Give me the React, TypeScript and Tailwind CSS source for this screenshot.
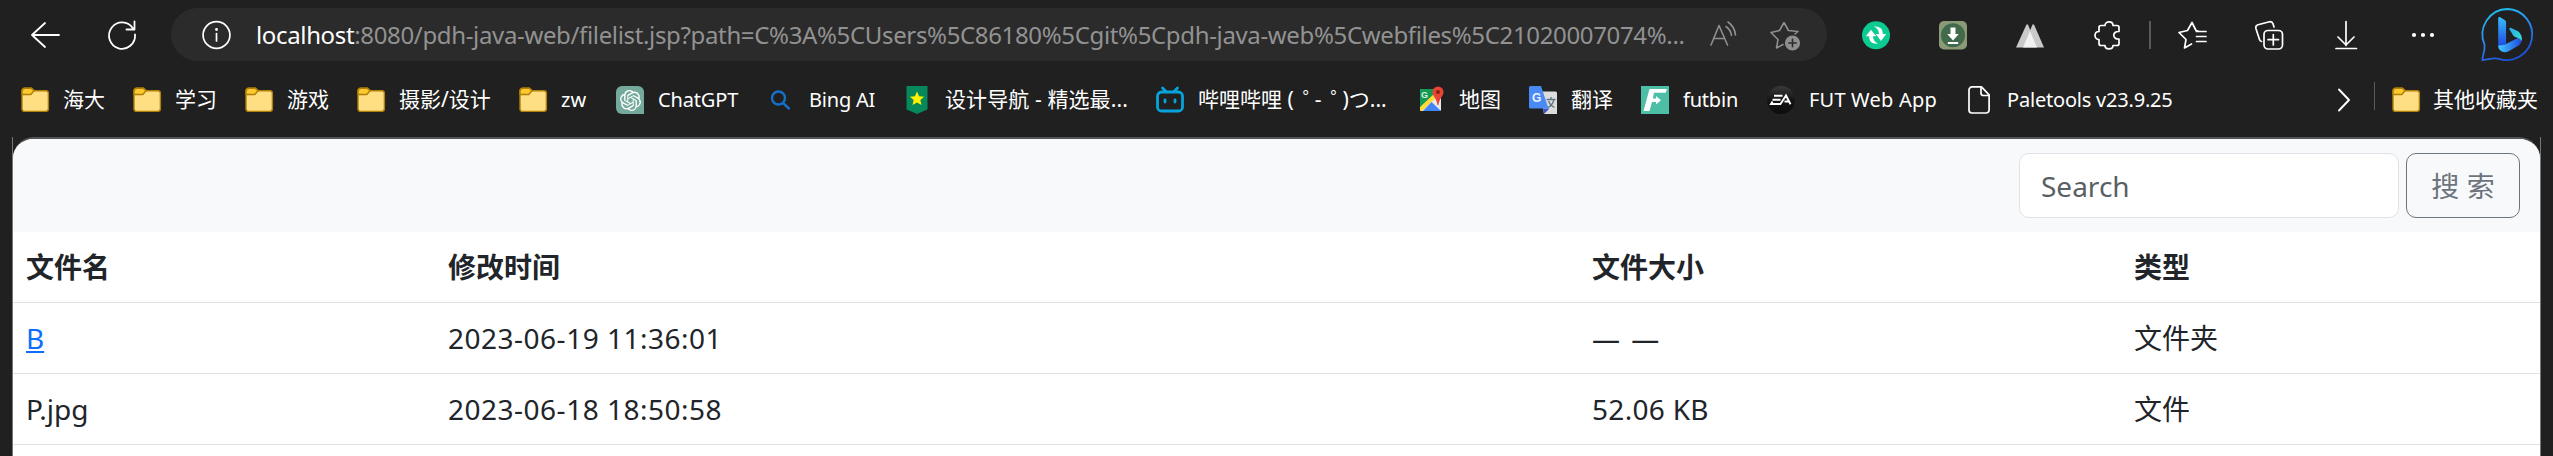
import { type ReactNode } from "react";
import { SiOpenai } from "react-icons/si";

const box = "h-7 w-7 shrink-0 overflow-visible";

function Line({ children, w = 1.8, color = "#fff" }: { children: ReactNode; w?: number; color?: string }) {
  return (
    <svg viewBox="0 0 28 28" className={box} fill="none" stroke={color} strokeWidth={w} strokeLinecap="round" strokeLinejoin="round">
      {children}
    </svg>
  );
}

function Folder() {
  return (
    <svg viewBox="0 0 28 28" className={box}>
      <path d="M1 5.2a3 3 0 0 1 3-3h6.500l2.800 2.600H25a2.400 2.400 0 0 1 2.400 2.400v15.600a2.600 2.600 0 0 1-2.600 2.600H3.400A2.400 2.400 0 0 1 1 23Z" fill="#ffdf84" stroke="#b07f07" strokeWidth="1.4" />
      <path d="M1 8V5.200a3 3 0 0 1 3-3h6.200L13 4.800 9.800 8.500H1.500Z" fill="#fcc92e" stroke="#b07f07" strokeWidth="1.4" />
    </svg>
  );
}

const chatgpt = (
  <div className="flex h-7 w-7 shrink-0 items-center justify-center rounded-[6px] rounded-br-none bg-[#74aa9c] text-white">
    <SiOpenai size={21} />
  </div>
);

const search = (
  <Line w={2.4} color="#1670c8">
    <circle cx="11.500" cy="12" r="6.500" />
    <path d="m16.500 17.500 5.500 5" />
  </Line>
);

const shield = (
  <svg viewBox="0 0 28 28" className={box}>
    <path d="M3.500 0h21v23.500L14 28 3.500 23.500Z" fill="#06885a" />
    <path d="m14 5.500 2.100 4.700 5 .5-3.800 3.400 1.200 5-4.500-2.700-4.500 2.700 1.200-5-3.800-3.400 5-.5Z" fill="#fff100" />
  </svg>
);

const bili = (
  <Line w={2.8} color="#06a3dc">
    <rect x="1.500" y="6" width="25" height="19" rx="4" />
    <path d="m6.500 2 3.500 3.500M21.500 2 18 5.500" />
    <path d="M9 14v2M19 14v2" />
  </Line>
);

const maps = (
  <svg viewBox="0 0 28 28" className={box}>
    <rect x="3" y="3" width="21" height="22" rx="1.500" fill="#e8eaea" />
    <path d="M3 4.500A1.500 1.500 0 0 1 4.500 3H19v6L3 24Z" fill="#159a53" />
    <path d="M3 21 18 7l3 3L5 25H4a1 1 0 0 1-1-1Z" fill="#ffd93b" />
    <path d="M6 25 14.500 16l9.500 9Z" fill="#4285f4" />
    <text x="4" y="11.500" fontSize="9" fontWeight="700" fill="#d9f1e3" fontFamily="Liberation Sans, sans-serif">G</text>
    <path d="M21 .5a5.500 5.500 0 0 1 5.500 5.500c0 4-4.500 7-5 13h-1c-.5-6-5-9-5-13A5.500 5.500 0 0 1 21 .5Z" fill="#e94335" />
    <circle cx="21" cy="6" r="2" fill="#8c1f14" />
  </svg>
);

const translate = (
  <svg viewBox="0 0 28 28" className={box}>
    <path d="M11 5.500h15.500A1.500 1.500 0 0 1 28 7v21H15Z" fill="#dcdcdc" />
    <path d="M14 22.500h6.500L15 28Z" fill="#3a53c5" />
    <path d="M1.500 0H12l7.500 22.500h-18A1.500 1.500 0 0 1 0 21V1.500A1.500 1.500 0 0 1 1.500 0Z" fill="#4a8af5" />
    <text x="3" y="16" fontSize="12" fontWeight="700" fill="#e9f1ff" fontFamily="Liberation Sans, sans-serif">G</text>
    <path d="M17.500 13.500h9M22 11v2.500M25 13.500c-1 4-3 6.500-6 8M19.500 15c1 3 3 5 6 6.500" fill="none" stroke="#5d7680" strokeWidth="1.300" />
  </svg>
);

const futbin = (
  <svg viewBox="0 0 28 28" className={box}>
    <path d="M0 0h28v28H0Z" fill="#4cbfa6" />
    <path d="M8.500 3H26l-1.300 3.800H13L11.800 12.500H15V10l5 4.300-5 4.200V16h-4L8.500 25H2.500Z" fill="#fff" />
  </svg>
);

const ea = (
  <svg viewBox="0 0 28 28" className={box}>
    <defs>
      <linearGradient id="ea" x1="0" y1="0" x2="0" y2="1">
        <stop offset="0" stopColor="#3a3a3a" />
        <stop offset="0.500" stopColor="#141414" />
        <stop offset="1" stopColor="#0d0d0d" />
      </linearGradient>
    </defs>
    <circle cx="14" cy="14" r="14" fill="url(#ea)" />
    <path d="M7 9.800h8.500M5.500 13.800h8M14 18H4l1.500-2.500M13.500 18l5.500-8.500 4.500 8.800M17.500 15.500h5" fill="none" stroke="#fff" strokeWidth="1.900" />
  </svg>
);

const page = (
  <Line w={1.7}>
    <path d="M7 .9h9.500l7.600 8V24a3 3 0 0 1-3 3H7a3 3 0 0 1-3-3V3.900a3 3 0 0 1 3-3Z" />
    <path d="M16 1v6a2.500 2.500 0 0 0 2.500 2.500H24" />
  </Line>
);

const kana = <span className="inline-block w-[21px] pl-[9px]">゜</span>;

const bookmarks: { icon: ReactNode; slot: string; text: string; label: ReactNode }[] = [
  { icon: <Folder />, slot: "w-[112px]", text: "text-[21px]", label: "海大" },
  { icon: <Folder />, slot: "w-[112px]", text: "text-[21px]", label: "学习" },
  { icon: <Folder />, slot: "w-[112px]", text: "text-[21px]", label: "游戏" },
  { icon: <Folder />, slot: "w-[162px]", text: "text-[21px]", label: "摄影/设计" },
  { icon: <Folder />, slot: "w-[97px]", text: "text-[20px]", label: "zw" },
  { icon: chatgpt, slot: "w-[151px]", text: "text-[20px] tracking-[-0.15px]", label: "ChatGPT" },
  { icon: search, slot: "w-[136px]", text: "text-[20px] tracking-[-0.2px]", label: "Bing AI" },
  { icon: shield, slot: "w-[253px]", text: "text-[21px] tracking-[0.1px]", label: "设计导航 - 精选最..." },
  { icon: bili, slot: "w-[261px]", text: "text-[21px]", label: <>哔哩哔哩 ({kana}-{kana})つ...</> },
  { icon: maps, slot: "w-[112px]", text: "text-[21px]", label: "地图" },
  { icon: translate, slot: "w-[112px]", text: "text-[21px]", label: "翻译" },
  { icon: futbin, slot: "w-[126px]", text: "text-[20px] tracking-[-0.2px]", label: "futbin" },
  { icon: ea, slot: "w-[198px]", text: "text-[20px] tracking-[0.2px]", label: "FUT Web App" },
  { icon: page, slot: "w-[220px]", text: "text-[20px] tracking-[-0.2px]", label: "Paletools v23.9.25" },
];

const rows = [
  { name: "B", link: true, time: "2023-06-19 11:36:01", size: "— —", kind: "文件夹" },
  { name: "P.jpg", link: false, time: "2023-06-18 18:50:58", size: "52.06 KB", kind: "文件" },
];

const cell = "h-[71px] border-b border-[#dee2e6] px-[14px] py-0 first:pl-[13px]";

function Bing() {
  return (
    <svg viewBox="0 0 53 53" className="ml-[44px] h-[53px] w-[53px] shrink-0 overflow-visible" fill="none">
      <defs>
        <linearGradient id="ring" x1="0.200" y1="0" x2="0.600" y2="1">
          <stop offset="0" stopColor="#1cc4f0" />
          <stop offset="0.500" stopColor="#2f86f0" />
          <stop offset="1" stopColor="#1b4fd8" />
        </linearGradient>
        <linearGradient id="stem" x1="0" y1="0" x2="0" y2="1">
          <stop offset="0" stopColor="#37bdff" />
          <stop offset="1" stopColor="#1c48e0" />
        </linearGradient>
        <linearGradient id="leaf" x1="0" y1="0" x2="1" y2="1">
          <stop offset="0" stopColor="#2aa5f0" />
          <stop offset="1" stopColor="#35e6c4" />
        </linearGradient>
        <linearGradient id="bowl" x1="0" y1="0" x2="1" y2="0">
          <stop offset="0" stopColor="#43c8ff" />
          <stop offset="1" stopColor="#1f49e0" />
        </linearGradient>
      </defs>
      <path d="M26.500 1A25.500 25.500 0 1 1 18 50.800C12 49.500 7 51.500 1.500 52.200 1 48 4.500 43 3.500 36.500A25.500 25.500 0 0 1 26.500 1Z" stroke="url(#ring)" strokeWidth="1.800" />
      <path d="M17.200 10.500c0-1.300 1-1.800 2-1.200l4.500 2.600a3 3 0 0 1 1.400 2.600V36l-7.900 3Z" fill="url(#stem)" />
      <path d="M17.200 37.500c0 5 5 8.500 10.500 5.700l9.500-5.500c4-2.700 4.300-6.700 2.600-9.200L24 36.500l-5.500 1Z" fill="url(#bowl)" />
      <path d="M28.500 21.500c-.7-1.600.3-2.300 1.700-1.500l5.800 2.700c4 2 5.600 6.500 4.600 10.300-.8-2-3-3-5-3.500-2-.6-3-1.200-3.500-2.200Z" fill="url(#leaf)" />
    </svg>
  );
}

export default function App() {
  return (
    <div className="flex h-[456px] w-[2553px] flex-col overflow-hidden bg-[#202020] font-['Noto_Sans','Noto_Sans_CJK_SC',sans-serif] text-white">
      <div className="flex h-[69px] shrink-0 items-center pl-[31px]">
        <Line>
          <path d="M1 14H28M14 2 1 14l13 12" />
        </Line>
        <div className="ml-[49px] flex">
          <Line>
            <path d="M27 13.500A13 13.200 0 1 1 25 7.500M26.500.5v8H18.500" />
          </Line>
        </div>
        <div className="ml-[35px] flex h-[53px] w-[1656px] shrink-0 items-center rounded-full bg-[#2b2b2b] pl-[31px]">
          <Line w={1.7}>
            <circle cx="14.500" cy="14" r="13.400" />
            <path d="M14.500 12.500V20" />
            <circle cx="14.500" cy="8.500" r="0.600" fill="#fff" />
          </Line>
          <div className="ml-[26px] flex w-[1450px] shrink-0 whitespace-nowrap text-[24px] tracking-[-0.35px] text-[#929292]">
            <span className="text-white">localhost</span>
            <span>:8080/pdh-java-web/filelist.jsp?path=C%3A%5CUsers%5C86180%5Cgit%5Cpdh-java-web%5Cwebfiles%5C21020007074%...</span>
          </div>
          <Line w={1.6} color="#8f8f8f">
            <path d="m5 24 8-19.500 8.500 19.500M7.800 17.500h10.500M20 5.500a13 13 0 0 1 5.500 9M22 1a18 18 0 0 1 7.500 13" />
          </Line>
          <div className="ml-[36px] flex">
            <Line w={1.6} color="#8f8f8f">
              <path d="M28 10.500 18.500 9.500 14 1.500 9.500 9.500 1 11.500l7 7L6.500 27l6.500-3.500M28 10.500 25 13" />
              <circle cx="22.500" cy="22" r="6.800" fill="#8f8f8f" />
              <path d="M22.500 18.300v7.400M18.800 22h7.400" stroke="#2b2b2b" />
            </Line>
          </div>
        </div>
        <div className="ml-[35px] flex items-center gap-[49px]">
          <svg viewBox="0 0 28 28" className={box}>
            <circle cx="14" cy="14.300" r="14" fill="#0bca92" />
            <path d="M12 5.500c7-.5 9 3.500 8.800 7.500h3.400l-5.200 7-5.200-7h3.200c0-3.500-1.500-5.500-5-7.500ZM16 22.800c-7 .5-9-3.500-8.800-7.500H3.800l5.200-6.500 5.200 6.500H11c0 3.500 1.500 5.500 5 7.500Z" fill="#fff" />
          </svg>
          <svg viewBox="0 0 28 28" className={box}>
            <rect y="0" width="28" height="28.500" rx="5" fill="#8a9a76" />
            <circle cx="14" cy="14.300" r="12" fill="#41694b" />
            <path d="M11.500 6.500h5V13h3.300L14 19.500 8.200 13h3.300ZM8.800 21h10.400v2H8.800Z" fill="#fff" />
          </svg>
          <svg viewBox="0 0 28 28" className={box}>
            <path d="M10.500 3.500h1.500L21 26.500H0ZM16.500 3.500H18L28 26.500H7Z" fill="#c9c9c9" />
            <path d="m14 10 7 16.500H7Z" fill="#f1f1f1" />
          </svg>
          <Line w={1.7}>
            <path d="M8 4.500h4C12-.3 20-.3 20 4.500h4a2 2 0 0 1 2 2V10.500C19 10 19 18.500 26 18V22.500a2 2 0 0 1-2 2H20C20 29 12 29 12 24.500H8a2 2 0 0 1-2-2V18.500C.7 18.500.7 10.500 6 10.500v-4a2 2 0 0 1 2-2Z" />
          </Line>
        </div>
        <div className="ml-7 h-7 w-[2px] bg-[#5a5a5a]" />
        <div className="ml-[27px] flex items-center gap-[49px]">
          <Line w={1.7}>
            <path d="M20 10 18 9.500 14 1.500 9.500 9.500 1 11.500l7 7L6.500 27l7-4M18.500 10.500H28M18.500 15.500H28M18.500 20.500H28" />
          </Line>
          <Line w={1.7}>
            <path d="m19 6-1-3.200a3 3 0 0 0-3.500-2L3 3.800A3 3 0 0 0 .9 7.400L4.500 18.500a3 3 0 0 0 2 2" />
            <rect x="9" y="9.500" width="18.500" height="18.500" rx="4" />
            <path d="M18.300 13.500v10.500M13 18.700h10.500" />
          </Line>
          <Line w={1.7}>
            <path d="M14 .5v24M6 16l8 8 8-8M4 27.500h20.500" />
          </Line>
          <svg viewBox="0 0 28 28" className={box} fill="#fff">
            <circle cx="5" cy="14" r="2.100" />
            <circle cx="14" cy="14" r="2.100" />
            <circle cx="23" cy="14" r="2.100" />
          </svg>
        </div>
        <Bing />
      </div>

      <div className="flex h-[62px] shrink-0 items-center pl-[21px]">
        {bookmarks.map((b, i) => (
          <div key={i} className={`flex shrink-0 items-center gap-[14px] whitespace-nowrap ${b.slot}`}>
            {b.icon}
            <span className={b.text}>{b.label}</span>
          </div>
        ))}
        <div className="ml-[147px] flex w-[42px]">
          <Line w={1.9}>
            <path d="m7 3.500 10 10.500-10 10.500" />
          </Line>
        </div>
        <div className="mb-2 h-7 w-px bg-[#5a5a5a]" />
        <div className="ml-[17px] flex items-center gap-[13px] whitespace-nowrap">
          <Folder />
          <span className="text-[21px]">其他收藏夹</span>
        </div>
      </div>

      <div className="mx-3 mt-[6px] flex flex-1 flex-col border-x border-[#777777]">
        <div className="flex flex-1 flex-col overflow-hidden rounded-t-[21px] border-t-2 border-[#555555] bg-white text-[#212529]">
          <div className="flex h-[93px] shrink-0 items-center justify-end gap-[7px] bg-[#f8f9fb] pr-5">
            <div className="flex h-[65px] w-[380px] items-center rounded-[10px] border border-[#dee2e6] bg-white pl-[21px] text-[28px] text-[#595f64]">Search</div>
            <div className="flex h-[65px] w-[114px] items-center justify-center rounded-[10px] border border-[#6c757d] text-[28px] text-[#6c757d]">搜 索</div>
          </div>
          <table className="w-full table-fixed border-separate border-spacing-0 text-left text-[28px] leading-[42px]">
            <colgroup>
              <col className="w-[421px]" />
              <col className="w-[1144px]" />
              <col className="w-[542px]" />
              <col />
            </colgroup>
            <thead>
              <tr>
                {["文件名", "修改时间", "文件大小", "类型"].map((h) => (
                  <th key={h} className={`${cell} font-bold`}>{h}</th>
                ))}
              </tr>
            </thead>
            <tbody>
              {rows.map((r) => (
                <tr key={r.name}>
                  <td className={cell}>{r.link ? <a className="text-[#0d6efd] underline">{r.name}</a> : r.name}</td>
                  <td className={`${cell} tracking-[0.5px]`}>{r.time}</td>
                  <td className={`${cell} ${r.link ? "tracking-[2px]" : "tracking-[0.3px]"}`}>{r.size}</td>
                  <td className={cell}>{r.kind}</td>
                </tr>
              ))}
            </tbody>
          </table>
        </div>
      </div>
    </div>
  );
}
